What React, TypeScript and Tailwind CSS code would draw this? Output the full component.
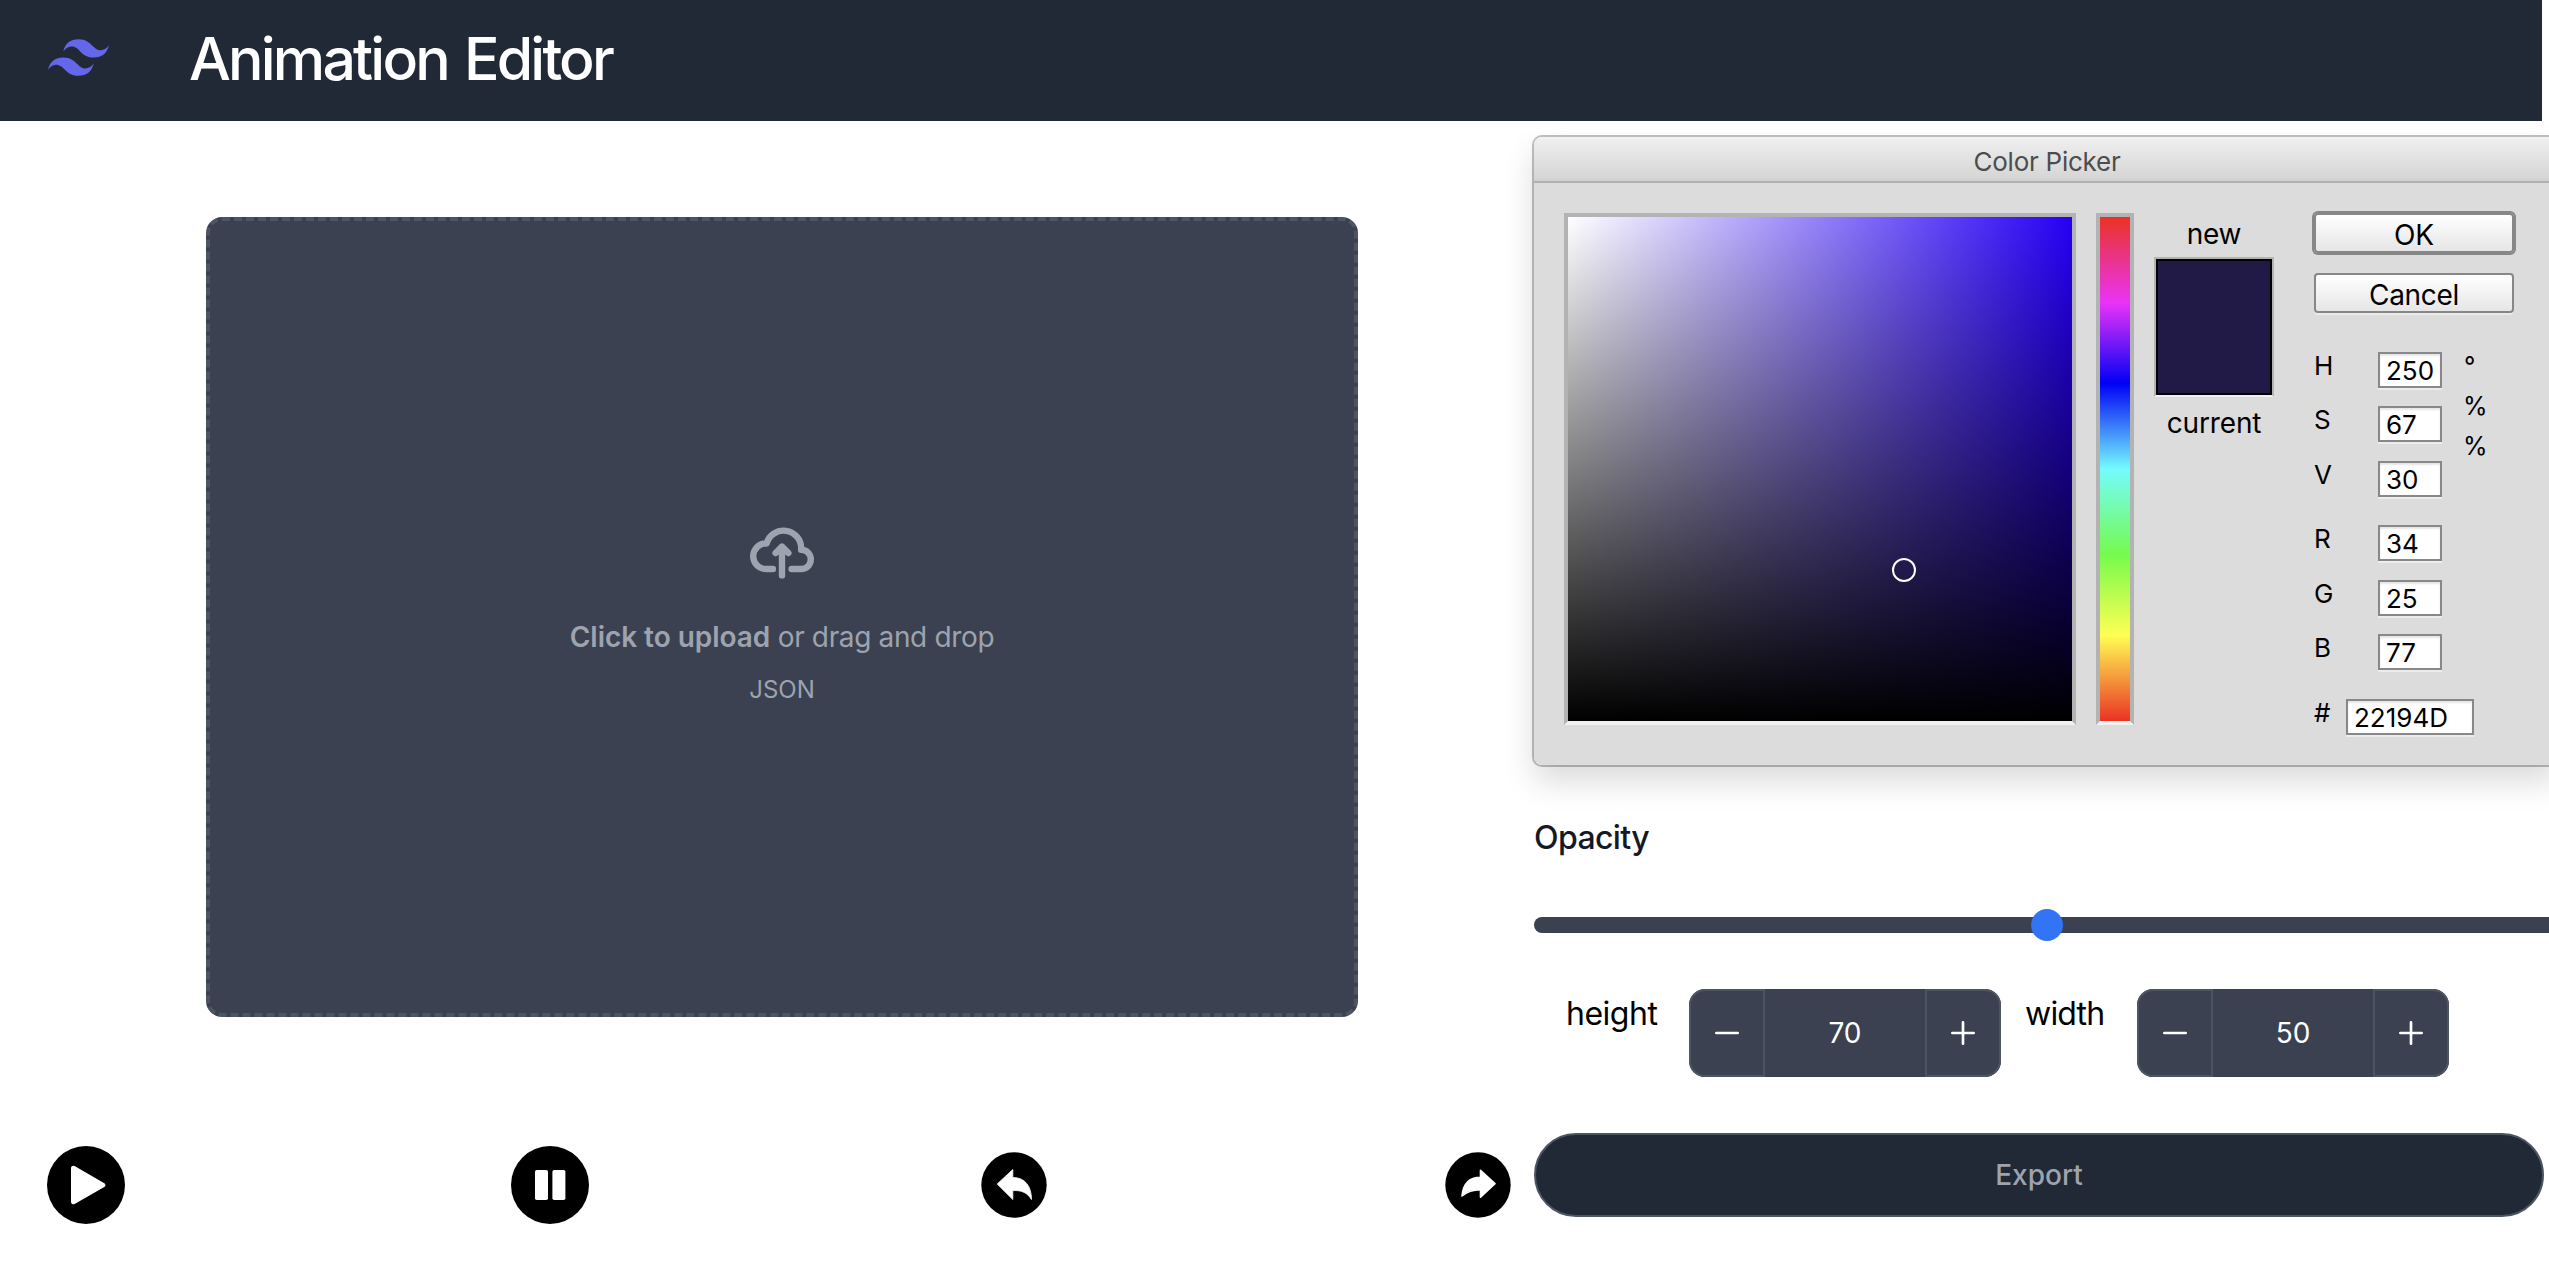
import type { ReactNode } from 'react';

function TailwindMark() {
  return (
    <svg viewBox="0 0 54 32.4" className="h-[37px] w-[61px] shrink-0 fill-[#6467ea]">
      <path d="M27 0c-7.2 0-11.7 3.6-13.5 10.8 2.7-3.6 5.85-4.95 9.45-4.05 2.054.513 3.522 2.004 5.147 3.653C30.744 13.09 33.808 16.2 40.5 16.2c7.2 0 11.7-3.6 13.5-10.8-2.7 3.6-5.85 4.95-9.45 4.05-2.054-.513-3.522-2.004-5.147-3.653C36.756 3.11 33.692 0 27 0zM13.5 16.2C6.3 16.2 1.8 19.8 0 27c2.7-3.6 5.85-4.95 9.45-4.05 2.054.514 3.522 2.004 5.147 3.653C17.244 29.29 20.308 32.4 27 32.4c7.2 0 11.7-3.6 13.5-10.8-2.7 3.6-5.85 4.95-9.45 4.05-2.054-.513-3.522-2.004-5.147-3.653C23.256 19.31 20.192 16.2 13.5 16.2z" />
    </svg>
  );
}

function Header() {
  return (
    <header className="flex h-[121px] w-[2542px] items-center bg-[#222936] pb-[7px] pl-12">
      <TailwindMark />
      <h1 className="ml-[80px] pt-[3px] text-[59px] leading-none font-medium tracking-[-2.8px] [word-spacing:3px] whitespace-nowrap text-white">
        Animation Editor
      </h1>
    </header>
  );
}

function UploadBox() {
  return (
    <label className="mt-24 ml-[206px] flex h-[800px] w-[1152px] flex-col items-center justify-center rounded-2xl border-4 border-dashed border-[#4d5562] bg-[#3b4150] text-[#9da3af]">
      <div className="flex flex-col items-center pt-10 pb-12">
        <svg viewBox="0 0 20 16" className="mb-8 size-16" fill="none" stroke="currentColor" strokeWidth="2" strokeLinecap="round" strokeLinejoin="round">
          <path d="M13 13h3a3 3 0 0 0 0-6h-.025A5.56 5.56 0 0 0 16 6.5 5.5 5.5 0 0 0 5.207 5.021C5.137 5.017 5.071 5 5 5a4 4 0 0 0 0 8h2.167M10 15V6m0 0L8 8m2-2 2 2" />
        </svg>
        <p className="mb-[17px] text-[28px] leading-10 whitespace-nowrap">
          <span className="font-semibold tracking-[-0.05px]">Click to upload</span>
          <span className="tracking-[-0.35px]"> or drag and drop</span>
        </p>
        <p className="-mb-px text-2xl">JSON</p>
      </div>
    </label>
  );
}

function RoundIcon({ size, children }: { size: 'lg' | 'sm'; children: ReactNode }) {
  return (
    <button className="flex size-[78px] shrink-0 items-center justify-center">
      <svg viewBox={size === 'lg' ? '0 0 78 78' : '0 0 66 66'} className={size === 'lg' ? 'size-[78px]' : 'size-[66px]'}>
        {children}
      </svg>
    </button>
  );
}

function Transport() {
  return (
    <div className="mt-[129px] ml-[47px] flex gap-[386px]">
      <RoundIcon size="lg">
        <circle cx="39" cy="39" r="39" />
        <path d="M27.3 20.5 57 37.7a1.6 1.6 0 0 1 0 2.8L27.3 57.5a1.8 1.8 0 0 1-2.7-1.5V22a1.8 1.8 0 0 1 2.7-1.5z" fill="#fff" stroke="#fff" strokeWidth="1.2" />
      </RoundIcon>
      <RoundIcon size="lg">
        <circle cx="39" cy="39" r="39" />
        <rect x="24" y="24" width="13" height="30" rx="1.8" fill="#fff" />
        <rect x="41.4" y="24" width="13" height="30" rx="1.8" fill="#fff" />
      </RoundIcon>
      <RoundIcon size="sm">
        <circle cx="33" cy="33" r="32.7" />
        <path d="M31.8 17.5 16.2 32 31.8 47.5V38.6C41 38 46.5 41 50.5 47.5 50.5 34 44 25.6 31.8 25.4Z" fill="#fff" stroke="#fff" strokeWidth=".8" strokeLinejoin="round" />
      </RoundIcon>
      <RoundIcon size="sm">
        <circle cx="33" cy="33" r="32.7" />
        <path d="M35.5 18.4 50 31.7 35.5 45.2V37.6C26 37.6 21.5 40 17 44 18 32 24 25.6 35.5 25.4Z" fill="#fff" stroke="#fff" strokeWidth="1.6" strokeLinejoin="round" />
      </RoundIcon>
    </div>
  );
}

function Field({ label, value, className = '' }: { label: string; value: string; className?: string }) {
  const hex = label === '#';
  return (
    <div className={`flex h-9 text-[26px] ${className}`}>
      <span className={`shrink-0 leading-[28px] ${hex ? 'w-8' : 'w-16'}`}>{label}</span>
      <div
        className={`h-9 shrink-0 border-2 border-[#888] bg-white pl-[6px] leading-[33px] shadow-[inset_0_2px_2px_rgba(0,0,0,0.1),0_2px_0_0_#ececec] ${hex ? 'w-32' : 'w-16'}`}
      >
        {value}
      </div>
    </div>
  );
}

function ColorPicker() {
  return (
    <section className="h-[628px] w-[1026px] overflow-hidden rounded-lg bg-[#dcdcdc] text-black">
      <div className="h-[46px] border-b-2 border-[#b1b1b1] bg-linear-to-b from-[#f0f0f0] to-[#d4d4d4] text-center text-[26px] leading-[50px] tracking-[-0.25px] text-[#4d4d4d] shadow-[inset_0_2px_0_0_rgba(255,255,255,0.2),inset_0_-2px_0_0_rgba(0,0,0,0.02)]">
        Color Picker
      </div>
      <div className="flex px-[30px] pt-[30px]">
        <div className="relative size-[512px] border-4 border-[#b3b3b3] border-b-[#f0f0f0]">
          <div className="size-full bg-[linear-gradient(to_top,#000,rgba(0,0,0,0)),linear-gradient(to_right,#fff,rgba(255,255,255,0))] bg-[#2600f5]" />
          <div className="absolute top-[341px] left-[324px] size-6 rounded-full border-2 border-white" />
        </div>
        <div className="ml-5 h-[512px] w-[38px] border-4 border-[#b3b3b3] border-b-[#f0f0f0] bg-[linear-gradient(to_bottom,#ea3323_0%,#ea33f7_17%,#0000f5_33%,#75fbfd_50%,#75fb4c_67%,#ffff54_83%,#ea3323_100%)] bg-origin-padding" />
        <div className="ml-5 flex">
          <div className="w-[120px] text-center text-[28px] leading-[42px]">
            <div className="tracking-[-0.2px]">new</div>
            <div className="mt-[2px] h-[140px] border-2 border-[#b3b3b3] border-b-[#f0f0f0]">
              <div className="size-full border-2 border-black bg-[#211a47]" />
            </div>
            <div className="mt-[5px] tracking-[-0.15px]">current</div>
          </div>
          <div className="ml-10 w-[200px]">
            <button className="block h-10 w-full rounded-sm border-2 border-[#878787] bg-linear-to-b from-white to-[#e6e6e6] text-center text-[28px] leading-[41px] shadow-[0_0_0_2px_#878787]">
              OK
            </button>
            <button className="mt-5 block h-10 w-full rounded-sm border-2 border-[#878787] bg-linear-to-b from-white to-[#e6e6e6] text-center text-[28px] leading-[41px] tracking-[-0.3px] shadow-[0_2px_0_0_#eaeaea]">
              Cancel
            </button>
            <div className="mt-[39px] flex">
              <div className="w-32">
                <Field label="H" value="250" />
                <Field label="S" value="67" className="mt-[18px]" />
                <Field label="V" value="30" className="mt-[19px]" />
                <Field label="R" value="34" className="mt-7" />
                <Field label="G" value="25" className="mt-[19px]" />
                <Field label="B" value="77" className="mt-[18px]" />
                <Field label="#" value="22194D" className="mt-[29px]" />
              </div>
              <div className="-mt-[6px] ml-[21px] text-[25px] leading-10">
                <div className="pl-px">°</div>
                <div>%</div>
                <div>%</div>
              </div>
            </div>
          </div>
        </div>
      </div>
    </section>
  );
}

function Stepper({ value }: { value: number }) {
  return (
    <div className="flex h-[88px] w-[312px] shrink-0 rounded-2xl bg-[#3b4150] text-white">
      <button className="flex w-[76px] items-center justify-center rounded-l-2xl border-2 border-[#4d5562]">
        <svg viewBox="0 0 18 18" className="size-6" stroke="currentColor" strokeWidth="2" strokeLinecap="round">
          <path d="M1 9h16" />
        </svg>
      </button>
      <div className="w-40 text-center text-[28px] leading-[89px]">{value}</div>
      <button className="flex w-[76px] items-center justify-center rounded-r-2xl border-2 border-[#4d5562]">
        <svg viewBox="0 0 18 18" className="size-6" stroke="currentColor" strokeWidth="2" strokeLinecap="round">
          <path d="M9 1v16M1 9h16" />
        </svg>
      </button>
    </div>
  );
}

function Controls() {
  return (
    <aside className="w-[1026px] shrink-0 pt-4">
      <div className="rounded-lg shadow-[0_0_0_2px_rgba(0,0,0,0.25),0_16px_32px_rgba(0,0,0,0.15)]">
        <ColorPicker />
      </div>
      <div className="mt-[49px] text-[32px] leading-[48px] font-medium tracking-[-0.6px] text-[#131927]">Opacity</div>
      <div className="mt-[55px] flex h-4 items-center justify-center rounded-full bg-[#3b4150]">
        <div className="size-8 shrink-0 rounded-full bg-[#3174f6]" />
      </div>
      <div className="mt-14 flex pl-[32px] text-[32px] leading-[50px] text-black">
        <span className="w-[123px] shrink-0 tracking-[-0.5px]">height</span>
        <Stepper value={70} />
        <span className="ml-6 w-28 shrink-0 tracking-[-0.8px]">width</span>
        <Stepper value={50} />
      </div>
      <button className="mt-14 block h-[84px] w-[1010px] rounded-full border-2 border-[#4d5562] bg-[#222936] text-[28px] leading-[81px] font-medium text-[#9da3af]">
        Export
      </button>
    </aside>
  );
}

export default function App() {
  return (
    <div className="h-[1276px] w-full overflow-hidden bg-white font-[Inter,sans-serif]">
      <Header />
      <main className="flex">
        <div className="w-[1534px] shrink-0">
          <UploadBox />
          <Transport />
        </div>
        <Controls />
      </main>
    </div>
  );
}
